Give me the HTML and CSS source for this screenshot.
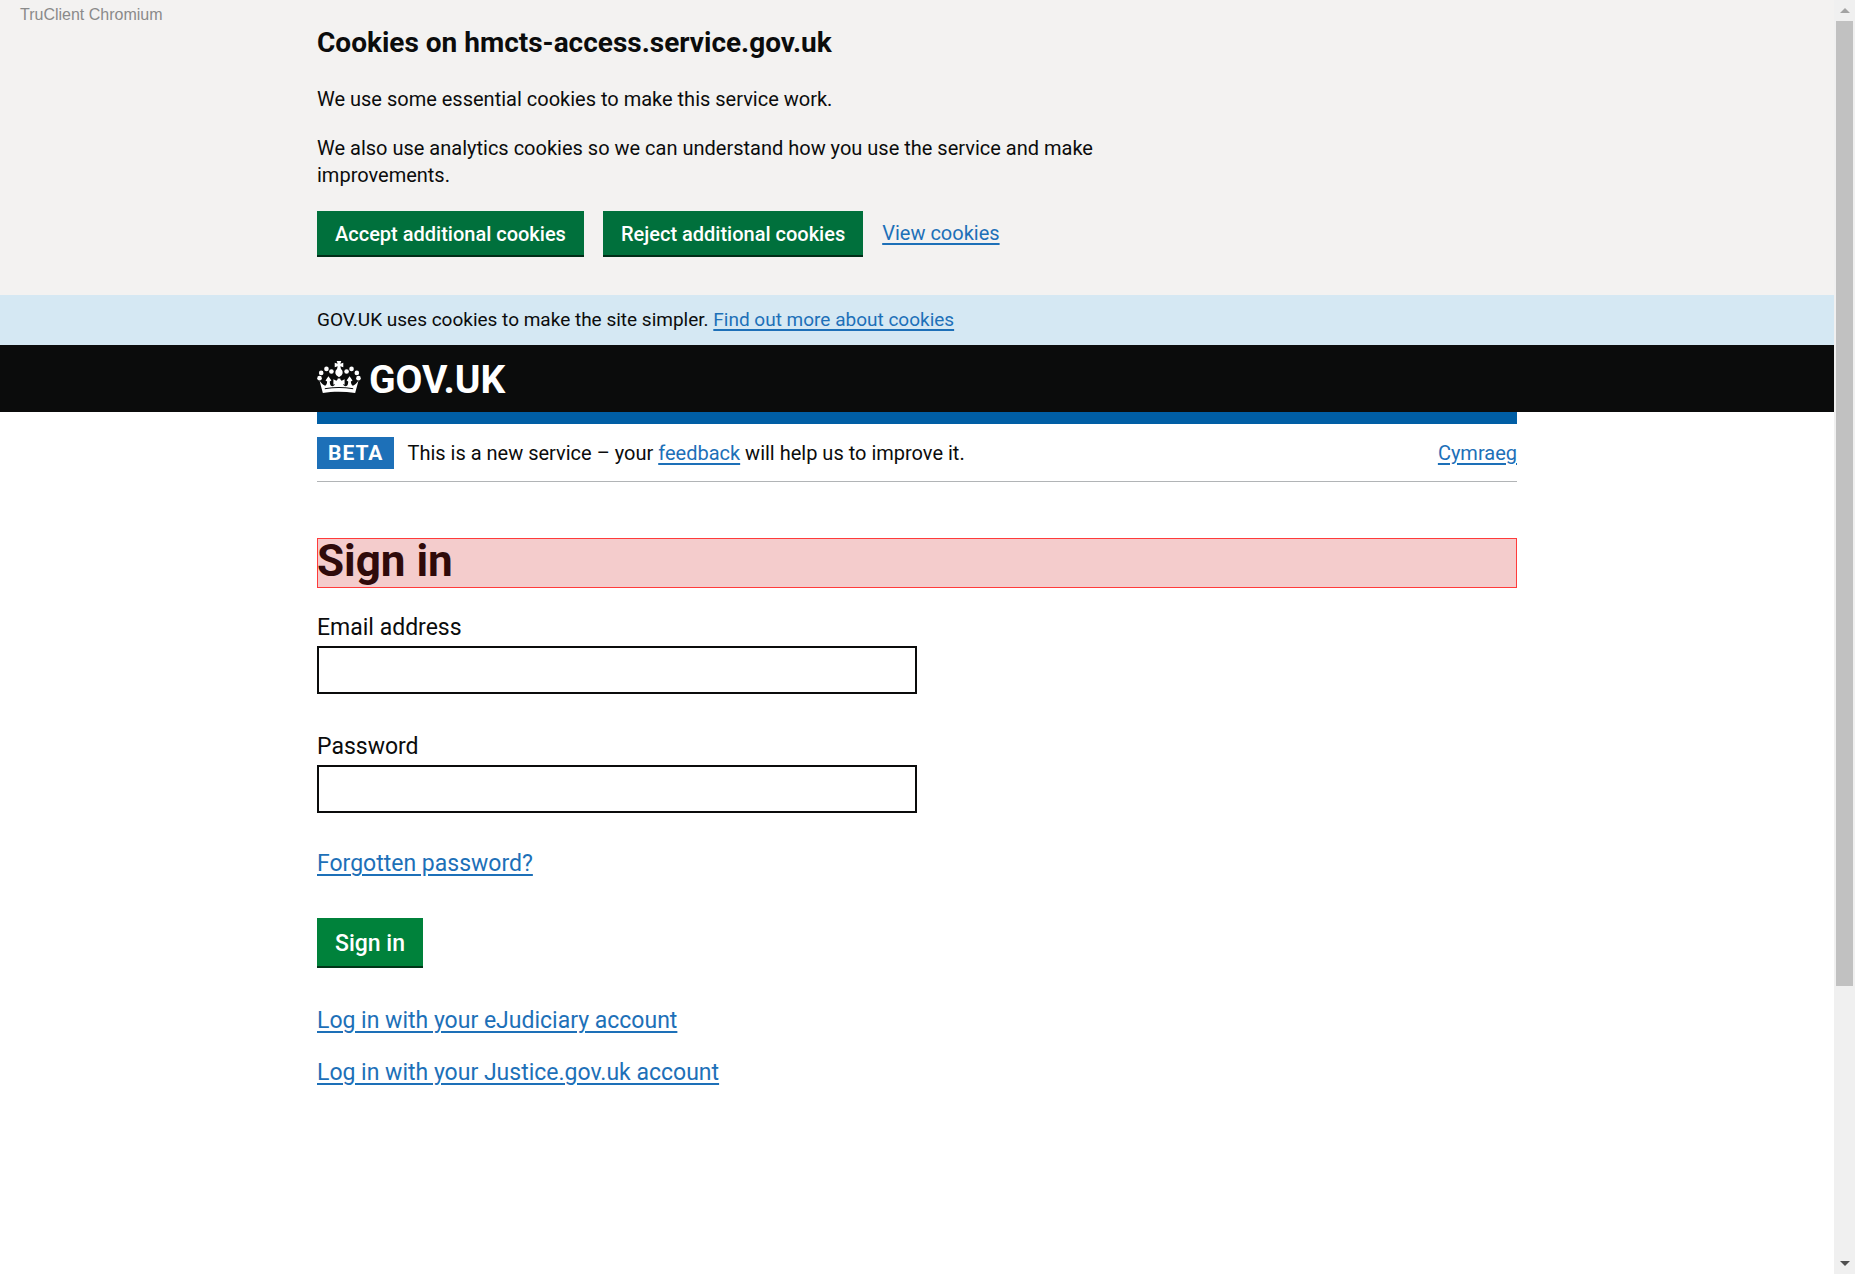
FILE: index.html
```html
<!DOCTYPE html>
<html lang="en">
<head>
<meta charset="utf-8">
<meta name="viewport" content="width=device-width, initial-scale=1">
<title>Sign in - GOV.UK</title>
<link rel="stylesheet" href="styles.css">
</head>
<body>
<div class="page">
  <span class="browser-label">TruClient Chromium</span>
  <section class="cookie-banner" aria-labelledby="cookie-title">
    <div class="container">
      <h2 class="cookie-title" id="cookie-title">Cookies on hmcts-access.service.gov.uk</h2>
      <p class="cookie-text">We use some essential cookies to make this service work.</p>
      <p class="cookie-text">We also use analytics cookies so we can understand how you use the service and make improvements.</p>
      <div class="cookie-actions">
        <button class="button button-small" type="button">Accept additional cookies</button>
        <button class="button button-small" type="button">Reject additional cookies</button>
        <a class="link" href="#cookies">View cookies</a>
      </div>
    </div>
  </section>
  <div class="cookie-message">
    <p class="container">GOV.UK uses cookies to make the site simpler. <a class="link" href="#about-cookies">Find out more about cookies</a></p>
  </div>
  <header class="header">
    <div class="container header-inner">
      <svg class="crown" viewBox="0 0 132 97" aria-hidden="true">
        <g fill="#fff">
          <path d="M59 0h14l-3 8 9-3v14l-9-3 2 8c6 4 7 13 2 19l-8 6-8-6c-5-6-4-15 2-19l2-8-9 3V5l9 3z"/>
          <circle cx="43" cy="32" r="7"/><circle cx="28" cy="24" r="7"/><circle cx="12" cy="36" r="7"/><circle cx="7" cy="52" r="7"/>
          <circle cx="89" cy="32" r="7"/><circle cx="104" cy="24" r="7"/><circle cx="120" cy="36" r="7"/><circle cx="125" cy="52" r="7"/>
          <path d="M7 60c6 8 11 13 17 15 4-3 6-7 6-13l-5-3 9-13 9 13-5 3c0 7 2 12 5 14 6 1 10-2 11-6l-5 2V55l9 5c3-2 4-4 4-7h8c0 3 1 5 4 7l9-5v17l-5-2c1 4 5 7 11 6 3-2 5-7 5-14l-5-3 9-13 9 13-5 3c0 6 2 10 6 13 6-2 11-7 17-15l-10 37c-33-5-68-5-98 0z"/>
        </g>
        <path d="M23 84c29-5 57-5 86 0" fill="none" stroke="#0b0c0c" stroke-width="3"/>
      </svg>
      <a class="logo" href="#home">GOV.UK</a>
    </div>
  </header>
  <div class="container main">
    <div class="phase">
      <strong class="tag">BETA</strong>
      <span class="phase-text">This is a new service – your <a class="link" href="#feedback">feedback</a> will help us to improve it.</span>
      <a class="link" href="#cymraeg">Cymraeg</a>
    </div>
    <main>
      <h1 class="title">Sign in</h1>
      <form class="form">
        <div class="field">
          <label for="email">Email address</label>
          <input class="input" id="email" type="email">
        </div>
        <div class="field">
          <label for="password">Password</label>
          <input class="input" id="password" type="password">
        </div>
        <a class="link" href="#forgotten">Forgotten password?</a>
        <button class="button button-submit" type="submit">Sign in</button>
      </form>
      <nav class="alternatives" aria-label="Other ways to sign in">
        <a class="link" href="#ejudiciary">Log in with your eJudiciary account</a>
        <a class="link" href="#justice">Log in with your Justice.gov.uk account</a>
      </nav>
    </main>
  </div>
</div>
<div class="scrollbar" aria-hidden="true">
  <span class="arrow arrow-up"></span>
  <span class="thumb"></span>
  <span class="track"></span>
  <span class="arrow arrow-down"></span>
</div>
</body>
</html>
```

FILE: styles.css
```css
* { box-sizing: border-box; }

body {
  margin: 0;
  display: flex;
  min-height: 100vh;
  background: #fff;
  color: #0b0c0c;
  font: 20px/27px Roboto, "Liberation Sans", sans-serif;
}

h1, h2, p { margin: 0; }

.page { flex: 1; position: relative; }

.container { width: 100%; max-width: 1200px; margin: 0 auto; }

.browser-label {
  position: absolute;
  top: 5px;
  left: 20px;
  color: #8a8a8a;
  font: 16px/20px "Liberation Sans", sans-serif;
}

.link {
  color: #1d70b8;
  text-decoration: underline;
  text-decoration-thickness: 2px;
  text-underline-offset: 3px;
}

.cookie-banner { padding: 24px 0 40px; background: #f3f2f1; }
.cookie-title { font-size: 28px; line-height: 38px; margin-bottom: 24px; }
.cookie-text { max-width: 792px; margin-bottom: 22px; }
.cookie-actions { display: flex; align-items: center; gap: 19px; }

.button {
  border: 0;
  border-radius: 0;
  color: #fff;
  background: #00703c;
  box-shadow: 0 2px 0 #002d18;
  font-family: inherit;
  font-weight: 500;
}
.button-small { height: 44px; padding: 2px 18px 0; font-size: 20px; }

.cookie-message { padding: 11px 0 12px; background: #d5e8f3; font-size: 19px; }

.header { background: #0b0c0c; }
.header-inner { display: flex; align-items: center; gap: 8px; height: 67px; }
.crown { width: 44px; height: 32px; margin-bottom: 3px; }
.logo {
  padding-top: 3px;
  color: #fff;
  font-size: 39px;
  line-height: 40px;
  font-weight: 700;
  text-decoration: none;
}

.main { border-top: 12px solid #005ea5; }

.phase {
  display: flex;
  align-items: center;
  padding: 13px 0 12px;
  border-bottom: 1px solid #b1b4b6;
}
.tag {
  padding: 0 11px;
  margin-right: 13px;
  color: #fff;
  background: #1d70b8;
  font-size: 21px;
  line-height: 32px;
  letter-spacing: 1px;
}
.phase-text { flex: 1; }

.title {
  margin: 56px 0 22px;
  padding-bottom: 4px;
  outline: 1px solid #ff3b3b;
  outline-offset: -1px;
  background: #f4cccc;
  color: #2f0a0a;
  font-size: 44px;
  line-height: 46px;
}

.form, .alternatives {
  display: flex;
  flex-direction: column;
  align-items: flex-start;
  font-size: 23px;
  line-height: 32px;
}
.form { gap: 35px; }
.field { width: 100%; }
.field label { display: block; padding-top: 2px; margin-bottom: 2px; }
.input {
  display: block;
  width: 50%;
  height: 48px;
  padding: 0 8px;
  border: 2px solid #0b0c0c;
  border-radius: 0;
  font: inherit;
}
.button-submit {
  height: 48px;
  padding: 2px 18px 0;
  margin-top: 3px;
  background: #00823b;
  box-shadow: 0 2px 0 #003618;
  font-size: 23px;
}
.alternatives { gap: 20px; margin-top: 39px; }

.scrollbar {
  display: flex;
  flex-direction: column;
  align-items: center;
  width: 21px;
  background: #f0f0f0;
}
.thumb { flex: 965; width: 17px; background: #c1c1c1; }
.track { flex: 267; }
.arrow { height: 21px; display: flex; align-items: center; }
.arrow::before { content: ""; border: 5px solid transparent; }
.arrow-up::before { border-top-width: 0; border-bottom-color: #a3a3a3; }
.arrow-down::before { border-bottom-width: 0; border-top-color: #505050; }
```
